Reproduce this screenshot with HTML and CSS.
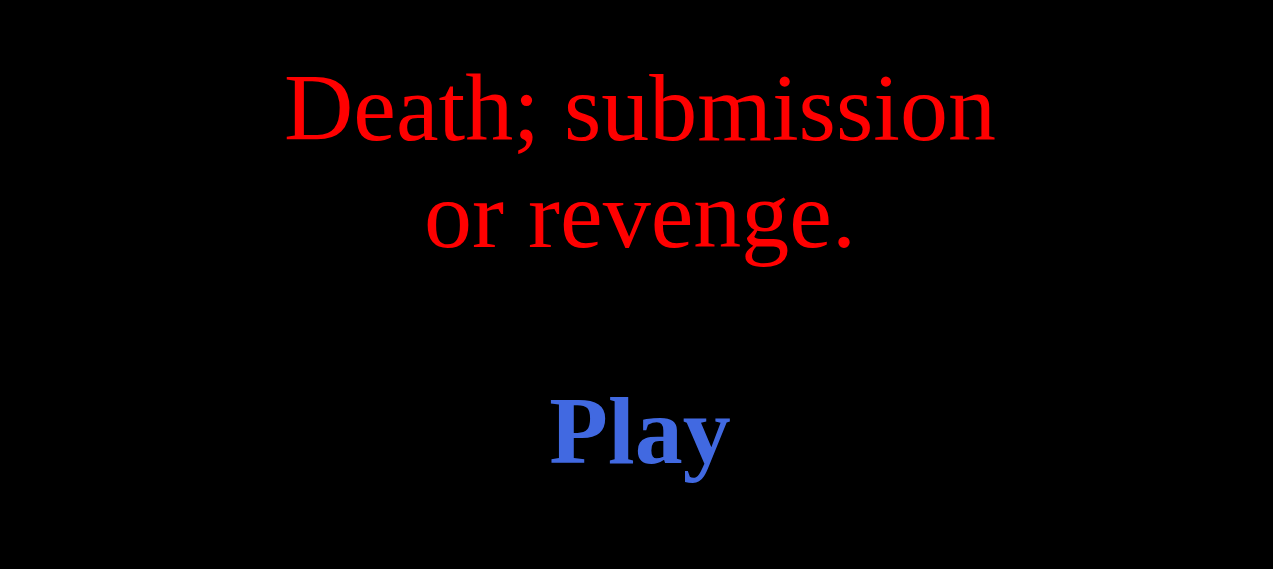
FILE: index.html
```html
<!DOCTYPE html>
<html lang="en">
  <head>
    <meta charset="UTF-8" />
    <meta name="viewport" content="width=device-width, initial-scale=1.0" />
    <title>Death; submission or revenge.</title>
    <link rel="stylesheet" href="styles.css">
  </head>
  <body>
    <div class="title-screen">
      <h1 class="tagline">Death; submission or revenge.</h1>
      <a class="play-link" href="#">Play</a>
    </div>
  </body>
</html>
```

FILE: styles.css
```css
body {
  margin: 0;
  background-color: #000;
  font-family: "Liberation Serif", "Times New Roman", serif;
  min-height: 100vh;
}
.title-screen {
  display: flex;
  flex-direction: column;
  align-items: center;
  padding-top: 54px;
  padding-left: 7px;
}
.tagline {
  max-width: 760px;
  margin: 0;
  font-size: 96px;
  font-weight: normal;
  line-height: 107px;
  color: #f00;
  text-align: center;
}
.play-link {
  margin-top: 109px;
  font-size: 96px;
  font-weight: bold;
  line-height: 107px;
  color: #4169e1;
  text-decoration: none;
}
```
